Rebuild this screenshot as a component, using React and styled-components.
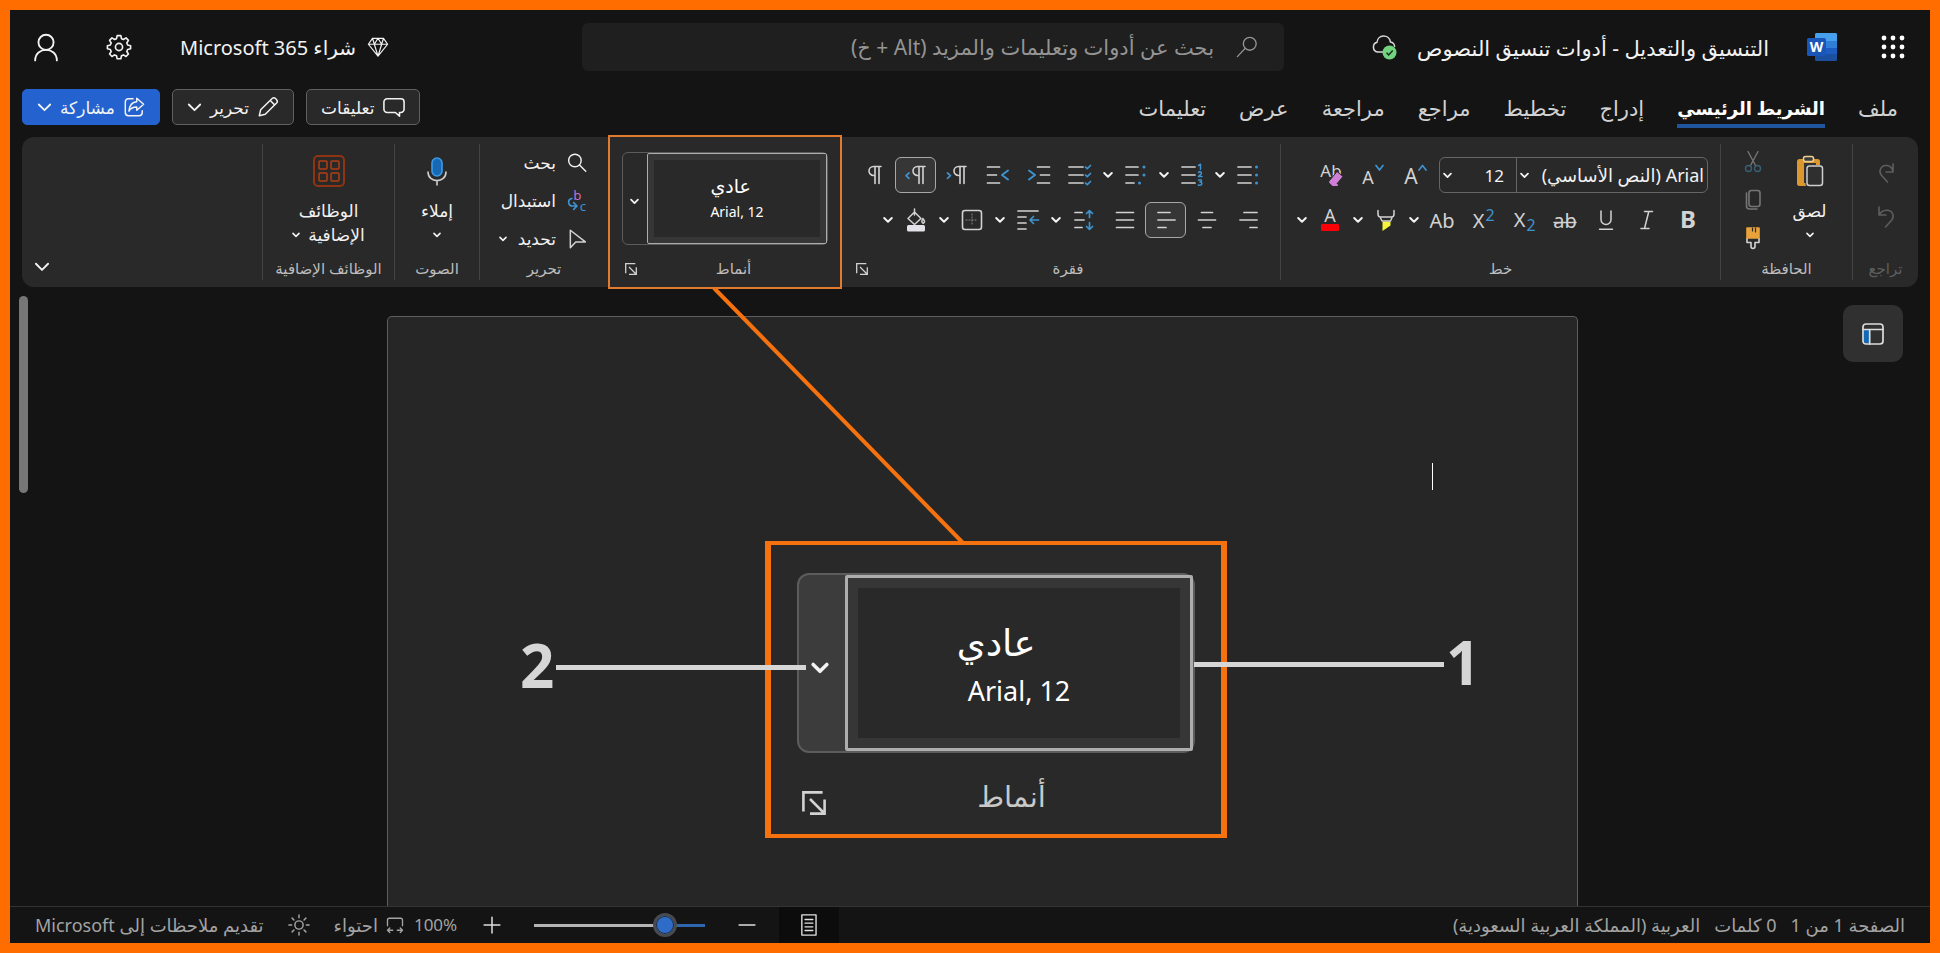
import React from 'react';
import styled, { createGlobalStyle } from 'styled-components';

const c = {
  frame: '#ff6c00',
  bg: '#141414',
  panel: '#292929',
  page: '#262626',
  line: '#444444',
  ink: '#f2f2f2',
  soft: '#d2d2d2',
  muted: '#a3a3a3',
  off: '#5e5e5e',
  blue: '#3d92d0',
  call: '#f5720f',
};

const GlobalStyle = createGlobalStyle`
  *, *::before, *::after { box-sizing: border-box; }
  body { margin: 0; background: ${c.bg}; }
  body, button, input, select { font-family: "Noto Sans", "DejaVu Sans", sans-serif; }
  button, select, input { color: inherit; margin: 0; }
`;

const Shell = styled.div`
  display: flex;
  flex-direction: column;
  min-height: 100vh;
  border: 10px solid ${c.frame};
  background: ${c.bg};
  color: ${c.ink};
  overflow: hidden;
`;

const PlainButton = styled.button`
  display: flex;
  align-items: center;
  justify-content: center;
  padding: 0;
  border: 0;
  background: none;
  white-space: nowrap;
  cursor: pointer;
`;

/* Title bar */
const TitleBar = styled.header`
  display: grid;
  grid-template-columns: 646fr 702fr 572fr;
  align-items: center;
  height: 74px;
`;
const TitleStart = styled.div`
  display: flex;
  align-items: center;
  padding-inline-start: 25px;
`;
const WordLink = styled.a`
  display: flex;
  margin-inline: 44px 38px;
`;
const DocTitle = styled.h1`
  margin: 0;
  margin-inline-end: 20px;
  padding-top: 2px;
  font-size: 21px;
  line-height: 28px;
  font-weight: 400;
  white-space: nowrap;
`;
const SearchBox = styled.label`
  display: flex;
  align-items: center;
  gap: 20px;
  height: 48px;
  padding-inline: 26px;
  border-radius: 6px;
  background: #1f1f1f;
  color: #949494;
`;
const SearchInput = styled.input`
  flex: 1;
  min-width: 0;
  border: 0;
  outline: 0;
  background: none;
  font-size: 21px;
  &::placeholder { color: #949494; opacity: 1; }
`;
const TitleEnd = styled.div`
  display: flex;
  align-items: center;
  justify-content: flex-end;
  gap: 48px;
  padding-inline-end: 24px;
`;
const BuyButton = styled(PlainButton)`
  gap: 11px;
  font-size: 20px;
  line-height: 28px;
  & > span { padding-top: 2px; }
`;

/* Tabs */
const TabBar = styled.nav`
  display: flex;
  align-items: center;
  height: 46px;
  padding-inline: 32px 12px;
`;
const Tabs = styled.div`
  display: flex;
  gap: 33px;
  padding-top: 8px;
`;
const Tab = styled.a`
  padding-bottom: 2px;
  border-bottom: 4px solid ${p => (p.$active ? '#1f559c' : 'transparent')};
  color: ${p => (p.$active ? '#ffffff' : c.soft)};
  font-size: ${p => (p.$active ? 18 : 21)}px;
  font-weight: ${p => (p.$active ? 700 : 400)};
  line-height: 28px;
  text-decoration: none;
  white-space: nowrap;
`;
const Actions = styled.div`
  display: flex;
  gap: 12px;
  margin-inline-start: auto;
`;
const ActionButton = styled(PlainButton)`
  gap: 8px;
  height: 36px;
  padding-inline: 14px;
  border: 1px solid ${p => (p.$primary ? '#2463cf' : '#606060')};
  border-radius: 5px;
  background: ${p => (p.$primary ? '#2463cf' : c.panel)};
  font-size: 17px;
`;

/* Ribbon */
const Ribbon = styled.section`
  display: flex;
  height: 150px;
  margin: 7px 12px 0;
  padding-block: 7px;
  border-radius: 12px;
  background: ${c.panel};
`;
const Group = styled.div`
  position: relative;
  display: flex;
  flex-direction: column;
  flex: none;
  width: ${p => p.$w}px;
  border-inline-end: ${p => (p.$open ? '0' : `1px solid ${c.line}`)};
`;
const GroupBody = styled.div`
  display: flex;
  flex: 1;
  min-height: 0;
`;
const GroupFooter = styled.div`
  display: grid;
  grid-template-columns: 1fr auto 1fr;
  align-items: center;
  flex: none;
  height: 24px;
  padding-inline-end: ${p => p.$inset || 0}px;
  color: ${p => (p.$off ? c.off : '#bdbdbd')};
  font-size: 15px;
  line-height: 24px;
  white-space: nowrap;
`;
const FooterLabel = styled.span`
  grid-column: 2;
`;
const Launcher = styled(PlainButton)`
  justify-self: end;
  padding-top: 2px;
  color: ${c.soft};
`;
const Stack = styled.div`
  display: flex;
  flex-direction: column;
  align-items: center;
  flex: ${p => (p.$w ? 'none' : 1)};
  width: ${p => (p.$w ? `${p.$w}px` : 'auto')};
  gap: ${p => p.$gap}px;
  padding-top: ${p => p.$top}px;
`;
const BigButton = styled(PlainButton)`
  flex-direction: column;
  justify-content: flex-start;
  flex: ${p => (p.$w ? 'none' : 1)};
  width: ${p => (p.$w ? `${p.$w}px` : 'auto')};
  margin-inline-start: ${p => (p.$w ? 8 : 0)}px;
  padding-top: 11px;
  font-size: 17px;
  line-height: 24px;
`;
const BigIcon = styled.span`
  display: flex;
  align-items: center;
  height: 32px;
  margin-bottom: 12px;
`;
const Line = styled.span`
  display: flex;
  align-items: center;
  gap: 8px;
  height: 24px;
`;
const Rows = styled.div`
  display: flex;
  flex-direction: column;
  gap: 9px;
  padding-top: 13px;
  padding-inline-start: 12px;
`;
const Row = styled.div`
  display: flex;
  height: 36px;
`;
const Tool = styled(PlainButton)`
  width: 41px;
  height: 36px;
  border: 1px solid ${p => (p.$on ? '#a8a8a8' : 'transparent')};
  border-radius: 6px;
  background: ${p => (p.$on ? '#363636' : 'none')};
`;
const Arrow = styled(PlainButton)`
  width: 15px;
  height: 36px;
`;
const FontBox = styled.div`
  display: flex;
  width: 269px;
  height: 36px;
  margin-inline-end: 4px;
  border: 1px solid #666666;
  border-radius: 6px;
`;
const Picker = styled.label`
  display: flex;
  align-items: center;
  flex: ${p => (p.$grow ? 1 : 'none')};
  width: ${p => (p.$grow ? 'auto' : '76px')};
  padding-inline: ${p => (p.$grow ? '3px 0' : '12px 0')};
  border-inline-end: ${p => (p.$grow ? '1px solid #666666' : '0')};
`;
const Select = styled.select`
  flex: 1;
  min-width: 0;
  padding: 0;
  border: 0;
  outline: 0;
  appearance: none;
  background: none;
  font-size: ${p => p.$size}px;
`;
const EditList = styled.div`
  display: flex;
  flex-direction: column;
  align-items: flex-start;
  padding-inline-start: 21px;
`;
const EditButton = styled(PlainButton)`
  gap: 11px;
  flex: none;
  height: 38px;
  font-size: 17px;
  line-height: 24px;
`;
const RibbonRest = styled.div`
  display: flex;
  flex: 1;
  align-items: flex-end;
  justify-content: flex-end;
  padding: 0 12px 5px;
`;

/* Style gallery, in the ribbon and enlarged in the callout */
const Gallery = styled.div`
  display: flex;
  width: ${p => (p.$large ? 398 : 206)}px;
  height: ${p => (p.$large ? 180 : 93)}px;
  border: ${p => (p.$large ? 2 : 1)}px solid #5c5c5c;
  border-radius: ${p => (p.$large ? 12 : 6)}px;
  background: ${p => (p.$large ? '#3c3c3c' : c.panel)};
`;
const StyleItem = styled(PlainButton)`
  flex: 1;
  border: ${p => (p.$large ? 3 : 1)}px solid #adadad;
  border-radius: 2px;
  background: ${c.panel};
  box-shadow: inset 0 0 0 ${p => (p.$large ? 10 : 6)}px #363636;
  color: #ffffff;
`;
const StyleText = styled.span`
  display: flex;
  flex-direction: column;
  align-items: flex-start;
  padding-top: ${p => (p.$large ? 8 : 0)}px;
  padding-right: ${p => (p.$large ? 11 : 0)}px;
  direction: ltr;
`;
const StyleName = styled.span`
  font-size: ${p => (p.$large ? 37 : 19)}px;
  line-height: ${p => (p.$large ? 48 : 26)}px;
`;
const StyleFont = styled.span`
  margin-left: ${p => (p.$large ? 11 : 0)}px;
  font-size: ${p => (p.$large ? 27 : 14)}px;
  line-height: ${p => (p.$large ? 50 : 26)}px;
`;
const GalleryMore = styled(PlainButton)`
  width: ${p => (p.$large ? 46 : 24)}px;
  padding-top: ${p => (p.$large ? 10 : 6)}px;
  padding-right: ${p => (p.$large ? 4 : 2)}px;
`;
const StylesBody = styled.div`
  display: flex;
  flex: 1;
  align-items: flex-start;
  padding-top: 8px;
  padding-inline-start: 14px;
`;

/* Annotations */
const Highlight = styled.div`
  position: absolute;
  inset: -9px 0;
  border: 2px solid #e27a30;
  pointer-events: none;
`;
const Connector = styled.svg`
  position: absolute;
  left: 0;
  top: 144px;
  z-index: 2;
  pointer-events: none;
`;
const Callout = styled.figure`
  position: absolute;
  left: 157px;
  top: 397px;
  z-index: 3;
  width: 462px;
  height: 297px;
  margin: 0;
  padding-top: 28px;
  border: solid ${c.call};
  border-width: 4px 6px;
  background: ${c.panel};
`;
const CalloutBody = styled.div`
  padding-inline: 26px;
`;
const CalloutFooter = styled.figcaption`
  display: grid;
  grid-template-columns: 1fr auto 1fr;
  align-items: end;
  height: 44px;
  margin-top: 18px;
  padding-inline-end: 31px;
  color: #c8c8c8;
  font-size: 29px;
  line-height: 38px;
`;
const Marker = styled.div`
  position: absolute;
  left: ${p => p.$x}px;
  top: ${p => p.$y}px;
  z-index: 4;
  display: flex;
  align-items: center;
  gap: 2px;
  direction: ltr;
  color: #d6d6d6;
  font: 700 60px/60px "Open Sans", "Noto Sans", sans-serif;
`;
const MarkerNumber = styled.span`
  padding-bottom: 5px;
`;
const MarkerLine = styled.span`
  width: 250px;
  height: 5px;
  background: #d6d6d6;
`;

/* Document */
const Canvas = styled.main`
  display: grid;
  grid-template-columns: 352fr 1191fr 377fr;
  flex: 1;
`;
const CanvasSide = styled.div`
  display: flex;
  align-items: flex-start;
  justify-content: ${p => (p.$end ? 'flex-end' : 'flex-start')};
  padding: ${p => (p.$end ? '9px 9px' : '18px 27px')};
`;
const NavButton = styled(PlainButton)`
  width: 60px;
  height: 57px;
  border-radius: 10px;
  background: #303030;
`;
const ScrollThumb = styled.span`
  width: 9px;
  height: 197px;
  border-radius: 5px;
  background: #767676;
`;
const Page = styled.article`
  margin-top: 29px;
  padding: 146px 144px 0;
  border: 1px solid #5e5e5e;
  border-bottom: 0;
  border-radius: 5px 5px 0 0;
  background: ${c.page};
`;
const Caret = styled.span`
  display: block;
  width: 1px;
  height: 27px;
  background: #ffffff;
`;

/* Status bar */
const StatusBar = styled.footer`
  display: flex;
  align-items: center;
  justify-content: space-between;
  height: 37px;
  padding-inline: 25px;
  border-top: 1px solid #333333;
  color: ${c.muted};
  font-size: 18px;
  line-height: 24px;
  white-space: nowrap;
`;
const StatusInfo = styled.div`
  display: flex;
  gap: 14px;
`;
const StatusTools = styled.div`
  display: flex;
  align-items: center;
  gap: 24px;
  height: 36px;
`;
const ZoomControl = styled.div`
  display: flex;
  align-items: center;
  gap: 33px;
  padding-inline-end: 2px;
`;
const ViewButton = styled(PlainButton)`
  width: 60px;
  height: 36px;
  background: #0c0c0c;
`;
const ZoomOut = styled(PlainButton)`
  margin-inline-start: -10px;
`;
const FitControl = styled.div`
  display: flex;
  align-items: center;
  gap: 10px;
`;
const ZoomValue = styled.span`
  font-size: 17px;
`;
const StatusButton = styled(PlainButton)`
  gap: 8px;
  font-size: 18px;
`;
const Slider = styled.input`
  width: 171px;
  height: 24px;
  appearance: none;
  background: linear-gradient(to left, #2f66b0 28px, #b4b4b4 28px) center / 100% 3px no-repeat;
  &::-webkit-slider-thumb {
    appearance: none;
    width: 24px;
    height: 24px;
    border: 3px solid #474b50;
    border-radius: 50%;
    background: #2f6cc8;
    box-shadow: inset 0 0 0 1px #1d2c44;
  }
`;

/* Icons */
const IconSvg = styled.svg`
  flex: none;
  overflow: visible;
`;
const Svg = ({ s = 24, w = s, v = 24, sw = 2, children }) => (
  <IconSvg width={w} height={s} viewBox={`0 0 ${(v * w) / s} ${v}`} fill="none" stroke="currentColor"
    strokeWidth={sw} strokeLinecap="round" strokeLinejoin="round" aria-hidden="true">{children}</IconSvg>
);
const Chevron = ({ s = 10, sw = 2 }) => (
  <IconSvg width={s} height={s} viewBox="0 0 10 10" fill="none" stroke="currentColor" strokeWidth={sw}
    strokeLinecap="round" strokeLinejoin="round" aria-hidden="true"><path d="M1.2 3 5 6.8 8.8 3" /></IconSvg>
);
const LauncherIcon = ({ s = 12 }) => (
  <IconSvg width={s} height={s} viewBox="0 0 12 12" fill="none" stroke="currentColor" strokeWidth="1.3" aria-hidden="true">
    <path d="M.7 10.3V.7h9.6M4 4l7 7M11.3 4.2v7.1H4" />
  </IconSvg>
);
const Lines = ({ d }) => <path d={d} stroke={c.soft} strokeWidth="1.7" />;
const Blue = ({ d, sw = 1.7 }) => <path d={d} stroke={c.blue} strokeWidth={sw} />;
const Glyph = ({ x, y, size, children, fill = c.soft, bold }) => (
  <text x={x} y={y} fontSize={size} fill={fill} stroke="none" textAnchor="middle" direction="ltr"
    fontWeight={bold ? 700 : 400} fontFamily='"Noto Sans", sans-serif'>{children}</text>
);
const Pilcrow = ({ x = 0 }) => (
  <path transform={`translate(${x} 0)`} stroke={c.soft} strokeWidth="1.6"
    d="M18 3.5h-7.5a4.4 4.4 0 0 0 0 9H12M12 3.5V20.5M16 3.5V20.5" />
);

const icons = {
  grow: <Svg w={28}><Glyph x={10} y={21} size={21}>A</Glyph><Blue d="m18 7 3.5-4.5L25 7" /></Svg>,
  shrink: <Svg w={28}><Glyph x={8} y={21} size={18}>A</Glyph><Blue d="m16 2.500 3.500 4.500 3.500-4.500" /></Svg>,
  clear: (
    <Svg>
      <Glyph x={10} y={14} size={17}>Ab</Glyph>
      <path d="m8.500 17.500 7.500-9 6 5-7 8.500-3.500.5z" fill="#cf7fd6" stroke={c.panel} strokeWidth="1" />
      <path d="m9 19 3 3h4" stroke="#cf7fd6" />
    </Svg>
  ),
  bold: <Svg><Glyph x={12} y={20} size={24} bold>B</Glyph></Svg>,
  italic: <Svg><path d="M9.5 3.5h8M6 20.5h8M13.800 3.500l-4.300 17" stroke={c.soft} strokeWidth="1.5" /></Svg>,
  under: <Svg><path d="M7 3v8.500a5 5 0 0 0 10 0V3M5.500 21.300h13" stroke={c.soft} strokeWidth="1.5" /></Svg>,
  strike: <Svg><Glyph x={12} y={20} size={20}>ab</Glyph><path d="M1 14.500h22" stroke={c.soft} strokeWidth="1.5" /></Svg>,
  sub: <Svg w={26}><Glyph x={8.5} y={19} size={20}>X</Glyph><Glyph x={20} y={23} size={16} fill={c.blue}>2</Glyph></Svg>,
  sup: <Svg w={26}><Glyph x={8.5} y={20} size={20}>X</Glyph><Glyph x={20} y={13} size={16} fill={c.blue}>2</Glyph></Svg>,
  effects: <Svg w={26}><Glyph x={13} y={20} size={20}>Ab</Glyph></Svg>,
  marker: (
    <Svg>
      <path d="M8.500 13.500h8v4l-8 5.500z" fill="#f4f53a" stroke="none" />
      <path d="M4 2.500V6c0 2 .8 3 2.500 3h11C19.200 9 20 8 20 6V2.500M6 9l2 4h8.500L18.300 9" stroke={c.soft} strokeWidth="1.5" />
    </Svg>
  ),
  color: <Svg><Glyph x={12} y={14} size={18}>A</Glyph><rect x="3" y="16" width="18" height="7" rx="1" fill="#fb0007" stroke="none" /></Svg>,
  bullets: <Svg><Lines d="M2 4h13M2 12h13M2 20h13" /><Blue sw={3} d="M20.500 4v0M20.500 12v0M20.500 20v0" /></Svg>,
  numbers: (
    <Svg><Lines d="M2 4h13M2 12h13M2 20h13" />
      <Blue sw={1.5} d="M18.500 2.500 20.500 1.200v5M18.500 9.500c1.500-1.800 4-.2 2.300 1.800l-2.300 2.300h3.500M18.500 17.200c3-1.500 4.200 1.500 1.500 1.900 3 0 2.500 4-1.700 2.900" /></Svg>
  ),
  multi: <Svg><Lines d="M2 4h12M2 12h12M2 20h8" /><Blue sw={3} d="M20 4v0M20 12v0M15.500 20v0" /></Svg>,
  checks: <Svg><Lines d="M1 4h14M1 12h14M1 20h14" /><Blue d="m17.500 4 1.700 1.700L22.500 2.500M17.500 12l1.700 1.700 3.300-3.200M17.500 20l1.700 1.700 3.300-3.200" /></Svg>,
  indent: <Svg><Lines d="M10.500 4h12M13.500 12h9M10.500 20h12" /><Blue sw={2} d="m2 7.500 6 4.500-6 4.500" /></Svg>,
  outdent: <Svg><Lines d="M1.500 4h12M1.500 12h9M1.500 20h12" /><Blue sw={2} d="m22 7.500-6 4.500 6 4.500" /></Svg>,
  pRtl: <Svg><Pilcrow x={3} /><Blue d="m2.500 10 3 2.700-3 2.700" /></Svg>,
  pLtr: <Svg><Pilcrow x={3} /><Blue d="m5 10-3 2.700 3 2.700" /></Svg>,
  pilcrow: <Svg><Pilcrow /></Svg>,
  right: <Svg><Lines d="M8 4.500h13M4 12h17M14 19.500h7" /></Svg>,
  center: <Svg><Lines d="M6.500 4.500h11M3.500 12h17M8 19.500h8" /></Svg>,
  left: <Svg><Lines d="M4 4.500h12M4 12h17M4 19.500h8" /></Svg>,
  justify: <Svg><Lines d="M3.500 4.500h17M3.500 12h17M3.500 19.500h17" /></Svg>,
  spacing: <Svg><Lines d="M3 4.500h7M3 12h9M3 19.500h7" /><Blue d="M17.500 9.500V3M14.500 5.500l3-2.800 3 2.800M17.500 14.500V21M14.500 18.500l3 2.800 3-2.800" /></Svg>,
  paraIndent: <Svg><Lines d="M2 3h20M2 9h8M2 15h8M2 21h8" /><Blue d="M22.500 12H14M17.500 8.500 14 12l3.500 3.500" /></Svg>,
  border: (
    <Svg><rect x="2.500" y="2.500" width="19" height="19" rx="2.500" stroke={c.soft} strokeWidth="1.6" />
      <path d="M12 6v12M6 12h12" stroke="#8a8a8a" strokeWidth="1" strokeDasharray="1 2" /></Svg>
  ),
  bucket: (
    <Svg><path d="m10.500 4 6.500 6.500-6.500 6-6.500-6zM10.500 1v6M18.800 10.500c1.800 2.500 2.400 3.500 1 4.500-1.500.5-2.800-1-1-4.500z" stroke={c.soft} strokeWidth="1.5" />
      <rect x="3" y="17" width="18" height="6.500" rx="1.500" fill="#e2e2e8" stroke="none" /></Svg>
  ),
  redo: <Svg sw={1.6}><path d="M19 3v8h-7M19 10.500c-1.500-7-10-8-12.500-2.500-1.300 3 0 5.500 2 7.500l5 5.500" stroke={c.off} /></Svg>,
  undo: <Svg sw={1.6}><path d="M5 2v8h7M5.500 9.500c3-5.500 11-5.500 13-1 1.500 3.500 0 6-2 8L11.500 22" stroke={c.off} /></Svg>,
  cut: <Svg sw={1.4}><path d="M7 1.500 14.800 16M17 1.500 9.200 16" stroke="#757575" /><circle cx="7.500" cy="18.500" r="3" stroke="#3a6078" /><circle cx="16.500" cy="18.500" r="3" stroke="#3a6078" /></Svg>,
  copy: <Svg sw={1.6}><rect x="8" y="2.500" width="11" height="16" rx="2.500" stroke="#757575" /><path d="M5.500 5v13c0 2 1 3 3 3h7.500" stroke="#757575" /></Svg>,
  painter: (
    <Svg sw={1.6}><path d="M6 12.500v4h4v4c0 2.600 4 2.600 4 0v-4h4v-4" stroke={c.soft} />
      <path d="M6 2h12v10H6z" fill="#e9a33a" stroke="#e9a33a" /><path d="M14.500 2v4M11.500 2v3" stroke={c.panel} strokeWidth="1.2" /></Svg>
  ),
  paste: (
    <IconSvg width="30" height="32" viewBox="0 0 30 32" fill="none" aria-hidden="true">
      <rect x="2" y="4" width="23" height="27" rx="2.500" fill="#dc982f" />
      <rect x="9" y="8" width="12" height="20" fill="#333333" />
      <rect x="8.500" y="1.500" width="10" height="5" rx="2" fill="#3a3a3a" stroke="#f0d090" strokeWidth="1.5" />
      <rect x="10.500" y="10" width="19" height="22" rx="3" fill={c.panel} />
      <rect x="12" y="11" width="15.500" height="19.500" rx="2.500" fill="#2f2f2f" stroke="#d0d0d0" strokeWidth="1.5" />
    </IconSvg>
  ),
  mic: (
    <IconSvg width="22" height="32" viewBox="0 0 22 32" fill="none" stroke="#cfcfcf" strokeWidth="1.6" strokeLinecap="round" aria-hidden="true">
      <rect x="6" y="3" width="10" height="18" rx="5" fill="#1769b5" stroke="#3c9be6" />
      <path d="M2 17c0 11.500 18 11.500 18 0M11 26v4" />
    </IconSvg>
  ),
  addins: (
    <IconSvg width="34" height="32" viewBox="0 0 34 32" fill="none" stroke="#b23f14" strokeWidth="1.5" aria-hidden="true">
      <rect x="2" y="1" width="30" height="30" rx="4" stroke="#8e3413" strokeWidth="2" />
      <rect x="7" y="6" width="8" height="8" rx="1" /><rect x="19" y="6" width="8" height="8" rx="1" />
      <rect x="7" y="18" width="8" height="8" rx="1" /><rect x="19" y="18" width="8" height="8" rx="1" />
    </IconSvg>
  ),
  find: <Svg s={20} sw={1.7}><circle cx="9.500" cy="9" r="7.500" /><path d="m15 14.500 7.500 7.500" /></Svg>,
  replace: (
    <Svg s={20}>
      <Glyph x={12.5} y={11} size={16} fill="#c66fd0">b</Glyph><Glyph x={19} y={24} size={16} fill={c.blue}>c</Glyph>
      <Blue d="M6 9c-6 1-5 9 1 9h4M8 14l4 4-4 4" sw={2} />
    </Svg>
  ),
  pointer: <Svg s={20} sw={1.8}><path d="M4 1.500v21l6.500-7H22z" stroke={c.soft} /></Svg>,
  comment: <Svg s={22} sw={1.7}><path d="M4.500 3h15A3.500 3.500 0 0 1 23 6.500v8a3.500 3.500 0 0 1-3.500 3.500H18v4l-4.500-4h-9A3.500 3.500 0 0 1 1 14.500v-8A3.500 3.500 0 0 1 4.500 3z" /></Svg>,
  pencil: <Svg s={22} sw={1.6}><path d="M2.500 21.500 4 15 16.500 2.800c1.200-1 2.600-1 3.700 0l1.200 1.200c1 1.100 1 2.500 0 3.700L9 20zM14.500 5l4.700 4.700" /></Svg>,
  share: (
    <Svg s={22} sw={1.6}><path d="M11 3H6C3.500 3 2.500 4.500 2.500 6.500V18c0 2 1 3.500 3.500 3.500h11.500c2 0 3.500-1 3.500-3.500v-2" />
      <path d="M15 2.500 22.500 9 15 15.500V12c-4 0-6.500 1-8.500 4.500C7 10.500 10 6.500 15 6.200z" /></Svg>
  ),
  diamond: <Svg s={22} sw={1.3}><path d="M6 2.500h12L22.500 9 12 22 1.500 9zM1.500 9h21M12 2.500 8 9l4 13 4-13zM6 2.500 8 9M18 2.500 16 9" /></Svg>,
  gear: (
    <Svg s={26} sw={1.5}><circle cx="12" cy="12" r="3.300" />
      <path d="M10.300 1.500h3.400l.6 2.800 1.800.8L18.500 3.600l2.200 2.300-1.500 2.400.8 1.900 2.700.6v2.800l-2.700.7-.8 1.900 1.500 2.300-2.200 2.300-2.400-1.500-1.800.8-.6 2.700h-3.400l-.6-2.700-1.800-.8-2.400 1.500-2.200-2.300 1.500-2.300-.8-1.900-2.700-.7v-2.800l2.700-.6.8-1.900L3.300 5.900l2.200-2.300 2.400 1.500 1.800-.8z" /></Svg>
  ),
  person: <Svg s={28} w={24} sw={1.6}><circle cx="10.300" cy="8" r="6.500" /><path d="M1 23.500c0-12 18.600-12 18.600 0" /></Svg>,
  lens: <Svg s={22} sw={1.5}><circle cx="15" cy="8.500" r="7" /><path d="M10 13.500 1.500 22.500" /></Svg>,
  cloud: (
    <IconSvg width="26" height="26" viewBox="0 0 26 26" fill="none" stroke="#d8d8d8" strokeWidth="1.5" aria-hidden="true">
      <path d="M12 18H6.500a5 5 0 0 1-.5-9.700c.5-8 12-8.500 13.500-.3 2 .3 4.500 2 4 5" />
      <circle cx="18.500" cy="18.500" r="7" fill="#72d47f" stroke="none" />
      <path d="m15.500 18.700 2.200 2.200 4-4.400" stroke="#16331b" />
    </IconSvg>
  ),
  waffle: (
    <IconSvg width="24" height="24" viewBox="0 0 24 24" fill="#ffffff" aria-hidden="true">
      {[3, 12, 21].map(y => [3, 12, 21].map(x => <circle key={`${x}-${y}`} cx={x} cy={y} r="2.400" />))}
    </IconSvg>
  ),
  word: (
    <IconSvg width="30" height="28" viewBox="0 0 30 28" aria-hidden="true">
      <rect x="8" y="0" width="22" height="28" rx="1.500" fill="#1b4fa0" />
      <path d="M8 1.500A1.500 1.500 0 0 1 9.500 0h19A1.500 1.500 0 0 1 30 1.500V8H8z" fill="#47a0ee" />
      <rect x="8" y="8" width="22" height="7" fill="#2f7fd8" />
      <rect x="8" y="15" width="22" height="6" fill="#1d5cc0" />
      <rect x="0" y="5" width="19" height="18" rx="1.500" fill="#1a56b8" />
      <Glyph x={9.5} y={19} size={14} fill="#ffffff" bold>W</Glyph>
    </IconSvg>
  ),
  nav: (
    <Svg sw={1.7}><rect x="2" y="2" width="20" height="20" rx="3" stroke="#dcdcdc" />
      <path d="M3 8h5v13H5c-1.300 0-2-.7-2-2z" fill="#1268b4" stroke="none" /><path d="M2 7.500h20M8.700 7.500V22" stroke="#dcdcdc" /></Svg>
  ),
  sun: <Svg s={22} sw={1.6}><circle cx="12" cy="12" r="4.500" /><path d="M12 1v3M12 20v3M1 12h3M20 12h3M4.500 4.500l2 2M17.500 17.500l2 2M4.500 19.500l2-2M17.500 6.500l2-2" /></Svg>,
  fit: <Svg s={18} sw={1.8}><path d="M2 13V5.500C2 4 2.800 3 4.500 3h15C21.200 3 22 4 22 5.500V13M2 19h7M5 16l-3 3 3 3M22 19h-7M19 16l3 3-3 3" /></Svg>,
  doc: <Svg s={22} w={18} sw={1.5}><rect x="2" y="1" width="15.500" height="22" stroke="#e0e0e0" /><path d="M5.500 6h8.500M5.500 10h8.500M5.500 14h8.500M5.500 18h8.500" stroke="#e0e0e0" /></Svg>,
  plus: <Svg s={18}><path d="M12 1.500v21M1.500 12h21" stroke="#dddddd" /></Svg>,
  minus: <Svg s={18}><path d="M1.500 12h21" stroke="#dddddd" /></Svg>,
};

const TABS = ['ملف', 'الشريط الرئيسي', 'إدراج', 'تخطيط', 'مراجع', 'مراجعة', 'عرض', 'تعليمات'];
const FONT_TOOLS = [
  ['bold', 'غامق'], ['italic', 'مائل'], ['under', 'تسطير'], ['strike', 'يتوسطه خط'], ['sub', 'منخفض'],
  ['sup', 'مرتفع'], ['effects', 'تأثيرات', true], ['marker', 'تمييز', true], ['color', 'لون الخط', true],
];
const PARA_TOP = [
  ['bullets', 'تعداد نقطي', true], ['numbers', 'تعداد رقمي', true], ['multi', 'قائمة متعددة المستويات', true],
  ['checks', 'قائمة اختيار'], ['indent', 'زيادة المسافة البادئة'], ['outdent', 'إنقاص المسافة البادئة'],
  ['pRtl', 'من اليمين إلى اليسار'], ['pLtr', 'من اليسار إلى اليمين', false, true], ['pilcrow', 'علامات الفقرات'],
];
const PARA_BOTTOM = [
  ['right', 'محاذاة لليمين'], ['center', 'توسيط'], ['left', 'محاذاة لليسار', false, true], ['justify', 'ضبط'],
  ['spacing', 'التباعد', true], ['paraIndent', 'مسافة بادئة خاصة', true], ['border', 'حدود', true], ['bucket', 'تظليل', true],
];

const ToolRow = ({ tools }) => (
  <Row>
    {tools.map(([id, label, menu, on]) => (
      <React.Fragment key={id}>
        <Tool $on={on} aria-label={label} aria-pressed={!!on}>{icons[id]}</Tool>
        {menu && <Arrow aria-label={`خيارات ${label}`}><Chevron /></Arrow>}
      </React.Fragment>
    ))}
  </Row>
);

const StyleGallery = ({ large }) => (
  <Gallery $large={large}>
    <StyleItem $large={large}>
      <StyleText $large={large}>
        <StyleName $large={large}>عادي</StyleName>
        <StyleFont $large={large}>Arial, 12</StyleFont>
      </StyleText>
    </StyleItem>
    <GalleryMore $large={large} aria-label="المزيد من الأنماط"><Chevron s={large ? 18 : 9} /></GalleryMore>
  </Gallery>
);

export default function App() {
  return (
    <Shell dir="rtl" lang="ar">
      <GlobalStyle />
      <TitleBar>
        <TitleStart>
          <PlainButton aria-label="مشغل التطبيقات">{icons.waffle}</PlainButton>
          <WordLink href="#word" aria-label="Word">{icons.word}</WordLink>
          <DocTitle>التنسيق والتعديل - أدوات تنسيق النصوص</DocTitle>
          {icons.cloud}
        </TitleStart>
        <SearchBox>
          {icons.lens}
          <SearchInput type="text" placeholder="بحث عن أدوات وتعليمات والمزيد (Alt + خ)" />
        </SearchBox>
        <TitleEnd>
          <BuyButton>{icons.diamond}<span>شراء Microsoft 365</span></BuyButton>
          <PlainButton aria-label="الإعدادات">{icons.gear}</PlainButton>
          <PlainButton aria-label="الحساب">{icons.person}</PlainButton>
        </TitleEnd>
      </TitleBar>

      <TabBar>
        <Tabs>
          {TABS.map((t, i) => <Tab key={t} href={`#tab-${i}`} $active={i === 1}>{t}</Tab>)}
        </Tabs>
        <Actions>
          <ActionButton>{icons.comment}<span>تعليقات</span></ActionButton>
          <ActionButton>{icons.pencil}<span>تحرير</span><Chevron s={15} sw={1.2} /></ActionButton>
          <ActionButton $primary>{icons.share}<span>مشاركة</span><Chevron s={15} sw={1.2} /></ActionButton>
        </Actions>
      </TabBar>

      <Ribbon>
        <Group $w={66}>
          <GroupBody>
            <Stack $gap={20} $top={17}>
              <PlainButton aria-label="إعادة">{icons.redo}</PlainButton>
              <PlainButton aria-label="تراجع">{icons.undo}</PlainButton>
            </Stack>
          </GroupBody>
          <GroupFooter $off><FooterLabel>تراجع</FooterLabel></GroupFooter>
        </Group>

        <Group $w={132}>
          <GroupBody>
            <BigButton $w={69}><BigIcon>{icons.paste}</BigIcon><Line>لصق</Line><Line><Chevron s={8} /></Line></BigButton>
            <Stack $w={44} $gap={14} $top={6}>
              <PlainButton aria-label="قص">{icons.cut}</PlainButton>
              <PlainButton aria-label="نسخ">{icons.copy}</PlainButton>
              <PlainButton aria-label="نسخ التنسيق">{icons.painter}</PlainButton>
            </Stack>
          </GroupBody>
          <GroupFooter><FooterLabel>الحافظة</FooterLabel></GroupFooter>
        </Group>

        <Group $w={440}>
          <GroupBody>
            <Rows>
              <Row>
                <FontBox>
                  <Picker $grow>
                    <Select $size={18} aria-label="الخط"><option>Arial (النص الأساسي)</option></Select>
                    <Arrow as="span"><Chevron s={9} /></Arrow>
                  </Picker>
                  <Picker>
                    <Select $size={17} aria-label="حجم الخط"><option>12</option></Select>
                    <Arrow as="span"><Chevron s={9} /></Arrow>
                  </Picker>
                </FontBox>
                <Tool aria-label="تكبير الخط">{icons.grow}</Tool>
                <Tool aria-label="تصغير الخط">{icons.shrink}</Tool>
                <Tool aria-label="مسح التنسيق">{icons.clear}</Tool>
              </Row>
              <ToolRow tools={FONT_TOOLS} />
            </Rows>
          </GroupBody>
          <GroupFooter><FooterLabel>خط</FooterLabel></GroupFooter>
        </Group>

        <Group $w={438} $open>
          <GroupBody>
            <Rows>
              <ToolRow tools={PARA_TOP} />
              <ToolRow tools={PARA_BOTTOM} />
            </Rows>
          </GroupBody>
          <GroupFooter $inset={14}>
            <FooterLabel>فقرة</FooterLabel>
            <Launcher aria-label="إعدادات الفقرة"><LauncherIcon /></Launcher>
          </GroupFooter>
        </Group>

        <Group $w={234} $open>
          <StylesBody><StyleGallery /></StylesBody>
          <GroupFooter $inset={17}>
            <FooterLabel>أنماط</FooterLabel>
            <Launcher aria-label="جزء الأنماط"><LauncherIcon /></Launcher>
          </GroupFooter>
          <Highlight />
          <Connector width="370" height="260" viewBox="0 0 370 260" aria-hidden="true">
            <path d="M106 0 356 256" stroke={c.call} strokeWidth="4" />
          </Connector>
          <Callout>
            <CalloutBody><StyleGallery large /></CalloutBody>
            <CalloutFooter>
              <FooterLabel>أنماط</FooterLabel>
              <Launcher aria-label="جزء الأنماط"><LauncherIcon s={24} /></Launcher>
            </CalloutFooter>
          </Callout>
          <Marker $x={586} $y={488}><MarkerLine /><MarkerNumber>1</MarkerNumber></Marker>
          <Marker $x={-88} $y={491}><MarkerNumber>2</MarkerNumber><MarkerLine /></Marker>
        </Group>

        <Group $w={129}>
          <GroupBody>
            <EditList>
              <EditButton>{icons.find}<span>بحث</span></EditButton>
              <EditButton>{icons.replace}<span>استبدال</span></EditButton>
              <EditButton>{icons.pointer}<span>تحديد</span><Chevron s={8} /></EditButton>
            </EditList>
          </GroupBody>
          <GroupFooter><FooterLabel>تحرير</FooterLabel></GroupFooter>
        </Group>

        <Group $w={85}>
          <GroupBody>
            <BigButton><BigIcon>{icons.mic}</BigIcon><Line>إملاء</Line><Line><Chevron s={8} /></Line></BigButton>
          </GroupBody>
          <GroupFooter><FooterLabel>الصوت</FooterLabel></GroupFooter>
        </Group>

        <Group $w={132}>
          <GroupBody>
            <BigButton><BigIcon>{icons.addins}</BigIcon><Line>الوظائف</Line><Line>الإضافية <Chevron s={8} /></Line></BigButton>
          </GroupBody>
          <GroupFooter><FooterLabel>الوظائف الإضافية</FooterLabel></GroupFooter>
        </Group>

        <RibbonRest>
          <PlainButton aria-label="طي الشريط"><Chevron s={16} sw={1.2} /></PlainButton>
        </RibbonRest>
      </Ribbon>

      <Canvas>
        <CanvasSide><NavButton aria-label="التنقل">{icons.nav}</NavButton></CanvasSide>
        <Page><Caret /></Page>
        <CanvasSide $end><ScrollThumb /></CanvasSide>
      </Canvas>

      <StatusBar>
        <StatusInfo>
          <span>الصفحة 1 من 1</span>
          <span>0 كلمات</span>
          <span>العربية (المملكة العربية السعودية)</span>
        </StatusInfo>
        <StatusTools>
          <ZoomControl>
            <ViewButton aria-label="تخطيط الطباعة">{icons.doc}</ViewButton>
            <ZoomOut aria-label="تصغير">{icons.minus}</ZoomOut>
            <Slider type="range" min="0" max="100" defaultValue="19" aria-label="تكبير/تصغير" />
            <PlainButton aria-label="تكبير">{icons.plus}</PlainButton>
          </ZoomControl>
          <FitControl>
            <ZoomValue>100%</ZoomValue>
            <StatusButton>{icons.fit}<span>احتواء</span></StatusButton>
          </FitControl>
          <PlainButton aria-label="الوضع الفاتح">{icons.sun}</PlainButton>
          <StatusButton>تقديم ملاحظات إلى Microsoft</StatusButton>
        </StatusTools>
      </StatusBar>
    </Shell>
  );
}
